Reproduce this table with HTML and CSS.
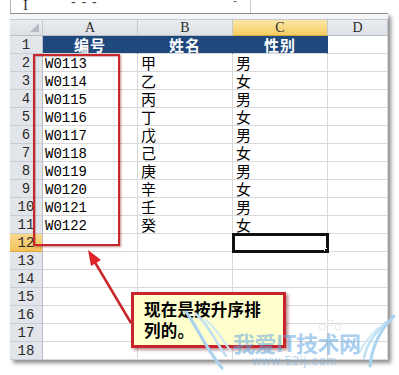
FILE: index.html
```html
<!DOCTYPE html>
<html>
<head>
<meta charset="utf-8">
<link rel="stylesheet" href="styles.css">
</head>
<body>
<div class="page">
  <div class="fbar">
    <span class="ibeam">I</span>
    <span class="dashes">- - -</span>
    <span class="tick">-</span>
    <span class="fsep"></span>
  </div>
  <div class="window">
    <div class="strip"></div>
    <div class="grid">
      <div class="c hd corner"></div><div class="c hd col">A</div><div class="c hd col">B</div><div class="c hd col sel">C</div><div class="c hd col">D</div>
      <div class="c rh">1</div><div class="c th">编号</div><div class="c th">姓名</div><div class="c th">性别</div><div class="c"></div>
      <div class="c rh">2</div><div class="c id">W0113</div><div class="c zh">甲</div><div class="c zh">男</div><div class="c"></div>
      <div class="c rh">3</div><div class="c id">W0114</div><div class="c zh">乙</div><div class="c zh">女</div><div class="c"></div>
      <div class="c rh">4</div><div class="c id">W0115</div><div class="c zh">丙</div><div class="c zh">男</div><div class="c"></div>
      <div class="c rh">5</div><div class="c id">W0116</div><div class="c zh">丁</div><div class="c zh">女</div><div class="c"></div>
      <div class="c rh">6</div><div class="c id">W0117</div><div class="c zh">戊</div><div class="c zh">男</div><div class="c"></div>
      <div class="c rh">7</div><div class="c id">W0118</div><div class="c zh">己</div><div class="c zh">女</div><div class="c"></div>
      <div class="c rh">8</div><div class="c id">W0119</div><div class="c zh">庚</div><div class="c zh">男</div><div class="c"></div>
      <div class="c rh">9</div><div class="c id">W0120</div><div class="c zh">辛</div><div class="c zh">女</div><div class="c"></div>
      <div class="c rh">10</div><div class="c id">W0121</div><div class="c zh">壬</div><div class="c zh">男</div><div class="c"></div>
      <div class="c rh">11</div><div class="c id">W0122</div><div class="c zh">癸</div><div class="c zh">女</div><div class="c"></div>
      <div class="c rh selr">12</div><div class="c"></div><div class="c"></div><div class="c active"></div><div class="c"></div>
      <div class="c rh">13</div><div class="c"></div><div class="c"></div><div class="c"></div><div class="c"></div>
      <div class="c rh">14</div><div class="c"></div><div class="c"></div><div class="c"></div><div class="c"></div>
      <div class="c rh">15</div><div class="c"></div><div class="c"></div><div class="c"></div><div class="c"></div>
      <div class="c rh">16</div><div class="c"></div><div class="c"></div><div class="c"></div><div class="c"></div>
      <div class="c rh">17</div><div class="c"></div><div class="c"></div><div class="c"></div><div class="c"></div>
      <div class="c rh">18</div><div class="c"></div><div class="c"></div><div class="c"></div><div class="c"></div>
    </div>
  </div>

  <div class="redbox"></div>

  <svg class="arrow" width="399" height="375" viewBox="0 0 399 375">
    <line x1="131" y1="323" x2="93" y2="259" stroke="#c8262c" stroke-width="2.5"/>
    <polygon points="88,250 101,260 91,266" fill="#e0222a"/>
  </svg>

  <div class="callout">现在是按升序排<br>列的。</div>

  <div class="watermark">
    <svg class="wings" width="399" height="375" viewBox="0 0 399 375">
      <path d="M186 312 C 198 328, 204 346, 222 368" fill="none" stroke="#a9d3ee" stroke-width="3" stroke-linecap="round"/>
      <path d="M196 314 C 210 326, 214 340, 226 356" fill="none" stroke="#bfe0f4" stroke-width="2.5" stroke-linecap="round"/>
      <path d="M206 320 C 218 330, 222 340, 230 350" fill="none" stroke="#cfe8f7" stroke-width="2" stroke-linecap="round"/>
      <path d="M394 316 C 380 330, 372 346, 370 366" fill="none" stroke="#a9d3ee" stroke-width="3" stroke-linecap="round"/>
      <path d="M386 322 C 374 334, 366 346, 364 358" fill="none" stroke="#bfe0f4" stroke-width="2.5" stroke-linecap="round"/>
      <path d="M378 328 C 368 338, 362 346, 360 352" fill="none" stroke="#cfe8f7" stroke-width="2" stroke-linecap="round"/>
      <circle cx="322" cy="327" r="3" fill="none" stroke="#e6e6e6" stroke-width="1"/>
      <circle cx="330" cy="323" r="3" fill="none" stroke="#e6e6e6" stroke-width="1"/>
      <circle cx="338" cy="327" r="3" fill="none" stroke="#e6e6e6" stroke-width="1"/>
    </svg>
    <span class="wm1">我爱IT技术网</span>
    <span class="wm2">www.52ij.com</span>
  </div>
</div>
</body>
</html>
```

FILE: styles.css
```css
html, body {
  margin: 0;
  padding: 0;
  background: #ffffff;
}
.page {
  position: relative;
  width: 399px;
  height: 375px;
  overflow: hidden;
  font-family: "Liberation Sans", "Noto Sans CJK SC", sans-serif;
}
.fbar {
  position: relative;
  margin-left: 10px;
  width: 377px;
  height: 13px;
  border-left: 1px solid #b5b5b5;
  background: #ffffff;
}
.ibeam {
  position: absolute;
  left: 12px;
  top: -2px;
  font-family: "Liberation Serif", serif;
  font-size: 15px;
  line-height: 15px;
  color: #333;
}
.dashes {
  position: absolute;
  left: 60px;
  top: -6px;
  font-family: "Liberation Sans", sans-serif;
  font-size: 14px;
  color: #444;
  letter-spacing: 1px;
}
.tick {
  position: absolute;
  left: 222px;
  top: -6px;
  font-size: 12px;
  color: #666;
}
.fsep {
  position: absolute;
  left: 239px;
  top: 0;
  width: 1px;
  height: 13px;
  background: #c8c8c8;
}
.window {
  margin-left: 10px;
  width: 378px;
  border-top: 1px solid #8a8f96;
  box-shadow: 3px 3px 4px rgba(0, 0, 0, 0.45);
  background: #ffffff;
}
.strip {
  height: 5px;
  background: #f4f5f7;
}
.grid {
  display: grid;
  grid-template-columns: 33px 95px 95px 95px 60px;
  grid-template-rows: 17px repeat(18, 18px);
}
.c {
  box-sizing: border-box;
  border-right: 1px solid #d9d9d9;
  border-bottom: 1px solid #d9d9d9;
  height: 100%;
  overflow: hidden;
  white-space: nowrap;
}
.hd {
  background: linear-gradient(#e9ecf0, #dde1e6);
  border-right: 1px solid #c3c8ce;
  border-bottom: 1px solid #b9bec5;
  border-top: 1px solid #c3c8ce;
}
.corner {
  position: relative;
}
.corner::after {
  content: "";
  position: absolute;
  right: 3px;
  bottom: 3px;
  width: 0;
  height: 0;
  border-left: 9px solid transparent;
  border-bottom: 9px solid #b7bcc3;
}
.col {
  font-family: "Liberation Serif", serif;
  font-size: 14px;
  line-height: 16px;
  text-align: center;
  color: #2a2a2a;
}
.col.sel {
  background: linear-gradient(#fbe6a8, #f6cd62);
  border-bottom: 1px solid #d6a93c;
}
.rh {
  background: #e2e6eb;
  border-right: 1px solid #b9bec5;
  border-bottom: 1px solid #c9ced4;
  font-family: "Liberation Mono", monospace;
  font-size: 14px;
  line-height: 19px;
  text-align: center;
  color: #2a2a2a;
}
.rh.selr {
  background: linear-gradient(#f9d88d, #f2c25a);
  border-bottom: 1px solid #d9a943;
}
.th {
  background: #1f497d;
  border-right: 1px solid #1f497d;
  border-bottom: 1px solid #d9d9d9;
  color: #ffffff;
  font-family: "Noto Sans CJK SC", sans-serif;
  font-weight: bold;
  font-size: 15px;
  line-height: 17px;
  text-align: center;
  letter-spacing: 1px;
}
.id {
  font-family: "Liberation Mono", monospace;
  font-size: 14px;
  line-height: 20px;
  padding-left: 2px;
  color: #000;
}
.zh {
  font-family: "Noto Sans CJK SC", sans-serif;
  font-size: 15px;
  line-height: 17px;
  padding-left: 3px;
  color: #000;
}
.active {
  position: relative;
  outline: 3px solid #111;
  outline-offset: -2px;
}
.active::after {
  content: "";
  position: absolute;
  right: -4px;
  bottom: -4px;
  width: 5px;
  height: 5px;
  background: #111;
  border: 1px solid #fff;
}
.redbox {
  position: absolute;
  left: 33px;
  top: 54px;
  width: 83px;
  height: 188px;
  border: 2px solid #c8262c;
  box-shadow: 1px 1px 2px rgba(120, 0, 0, 0.45), inset 1px 1px 1px rgba(120, 0, 0, 0.3);
}
.arrow {
  position: absolute;
  left: 0;
  top: 0;
}
.callout {
  position: absolute;
  left: 131px;
  top: 292px;
  width: 139px;
  height: 46px;
  padding: 4px 0 0 10px;
  background: rgba(255, 255, 200, 0.9);
  border: 3px solid #c8242b;
  box-shadow: 2px 2px 3px rgba(90, 0, 0, 0.45);
  font-family: "Noto Sans CJK SC", sans-serif;
  font-weight: bold;
  font-size: 16.5px;
  line-height: 21px;
  color: #000;
  letter-spacing: 0.2px;
  white-space: nowrap;
}
.watermark {
  position: absolute;
  left: 0;
  top: 0;
  width: 399px;
  height: 375px;
  pointer-events: none;
}
.wings {
  position: absolute;
  left: 0;
  top: 0;
}
.wm1 {
  position: absolute;
  left: 233px;
  top: 329px;
  font-family: "Noto Sans CJK SC", sans-serif;
  font-weight: bold;
  font-size: 22px;
  line-height: 26px;
  color: rgba(95, 165, 225, 0.55);
  letter-spacing: -0.5px;
}
.wm2 {
  position: absolute;
  left: 252px;
  top: 354px;
  font-family: "Liberation Sans", sans-serif;
  font-size: 12px;
  line-height: 14px;
  color: rgba(110, 175, 230, 0.55);
  letter-spacing: 1px;
}
```
